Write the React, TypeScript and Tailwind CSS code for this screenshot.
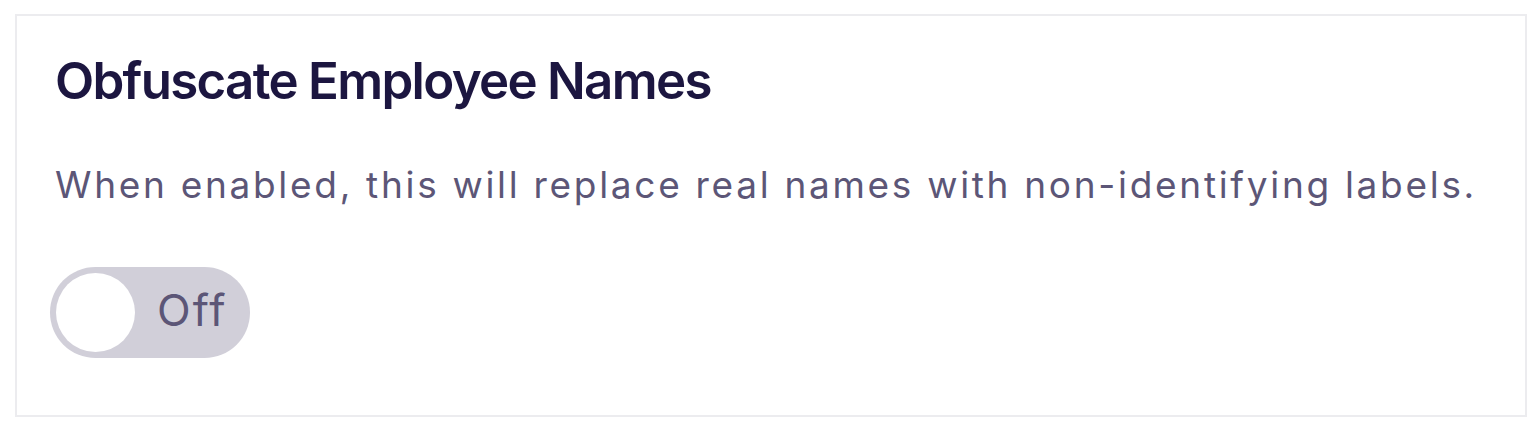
import React from "react";

export default function App() {
  return (
    <div className="w-[1540px] h-[432px] bg-white pt-[14px] pl-[15px] font-['Inter',sans-serif]">
      <div className="w-[1512px] h-[403px] border-2 border-[#ececef] bg-white pl-[38px] pt-[39px] flex flex-col items-start">
        <h1 className="text-[51px] leading-[51px] font-semibold tracking-[-1.7px] text-[#1c1640]">Obfuscate Employee Names</h1>
        <p className="mt-[60px] text-[37px] leading-[37px] tracking-[2.7px] text-[#5c5677]">
          When enabled, this will replace real names with non-identifying labels.
        </p>
        <button className="mt-[64px] -ml-[5px] w-[200px] h-[91px] rounded-full bg-[#d1cfd9] flex items-center pl-[6px]">
          <span className="w-[79px] h-[79px] rounded-full bg-white"></span>
          <span className="ml-[22px] -mt-[6px] text-[44px] leading-none tracking-[2px] text-[#5c5677]">Off</span>
        </button>
      </div>
    </div>
  );
}
